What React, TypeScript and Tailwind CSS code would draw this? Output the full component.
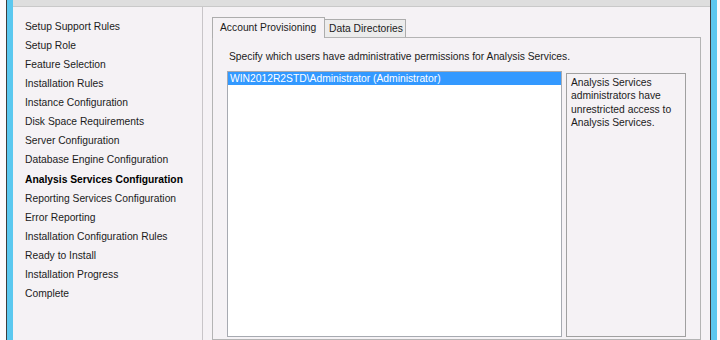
const navItems = [
  "Setup Support Rules",
  "Setup Role",
  "Feature Selection",
  "Installation Rules",
  "Instance Configuration",
  "Disk Space Requirements",
  "Server Configuration",
  "Database Engine Configuration",
  "Analysis Services Configuration",
  "Reporting Services Configuration",
  "Error Reporting",
  "Installation Configuration Rules",
  "Ready to Install",
  "Installation Progress",
  "Complete",
];

const ACTIVE = "Analysis Services Configuration";

export default function App() {
  return (
    <div className="flex h-[340px] w-[720px] overflow-hidden bg-white font-['Liberation_Sans',Arial,sans-serif] text-[10.3px] text-[#1b1b1b]">
      {/* left window frame */}
      <div className="w-[6px] bg-[#fcfbfc]" />
      <div className="w-px bg-[#3d3d3d]" />
      <div className="w-[6px] bg-[#5bc8ef]" />

      <div className="flex w-[697px] flex-col bg-[#f5f2f5]">
        <div className="h-[7px] border-b border-[#c9c9c9] bg-[#dedede]" />

        <div className="flex flex-1">
          {/* step list */}
          <nav className="w-[192px] border-r border-[#c8c5c8] pt-[10px] pl-[12px]">
            {navItems.map((item) => (
              <div
                key={item}
                className={
                  item === ACTIVE
                    ? "h-[19.07px] leading-[19px] font-bold text-black"
                    : "h-[19.07px] leading-[19px]"
                }
              >
                {item}
              </div>
            ))}
          </nav>

          {/* tab page */}
          <div className="flex flex-1 flex-col pt-[10px] pl-[9px] pr-[9px]">
            <div className="flex items-end">
              <div className="relative z-10 -mb-px flex h-[21px] w-[113px] items-center border border-b-0 border-[#adadad] bg-[#f5f2f5] pl-[7px]">
                Account Provisioning
              </div>
              <div className="-ml-px flex h-[18px] w-[82px] items-center border border-b-0 border-[#adadad] bg-[#ececec] pl-[4px] pt-px">
                Data Directories
              </div>
            </div>

            <div className="flex-1 border border-[#b4b4b4] px-[14px] pt-[12px]">
              <div className="pl-[2px] leading-[13px]">
                Specify which users have administrative permissions for Analysis Services.
              </div>

              <div className="mt-[8px] flex gap-[4px]">
                <div className="h-[266px] w-[335px] border border-[#a7aab1] bg-white">
                  <div className="h-[13px] bg-[#3399ff] pl-[2px] leading-[13px] text-white">
                    WIN2012R2STD\Administrator (Administrator)
                  </div>
                </div>
                <div className="mt-[2px] h-[264px] w-[120px] border border-[#a0a0a0] bg-[#f5f2f5] pt-[2px] pl-[4px] leading-[13.3px]">
                  Analysis Services administrators have unrestricted access to Analysis Services.
                </div>
              </div>
            </div>
          </div>
        </div>
      </div>

      {/* right window frame */}
      <div className="w-px bg-[#3d3d3d]" />
      <div className="w-[6px] bg-[#5bc8ef]" />
      <div className="flex-1 bg-[#fcfbfc]" />
    </div>
  );
}
